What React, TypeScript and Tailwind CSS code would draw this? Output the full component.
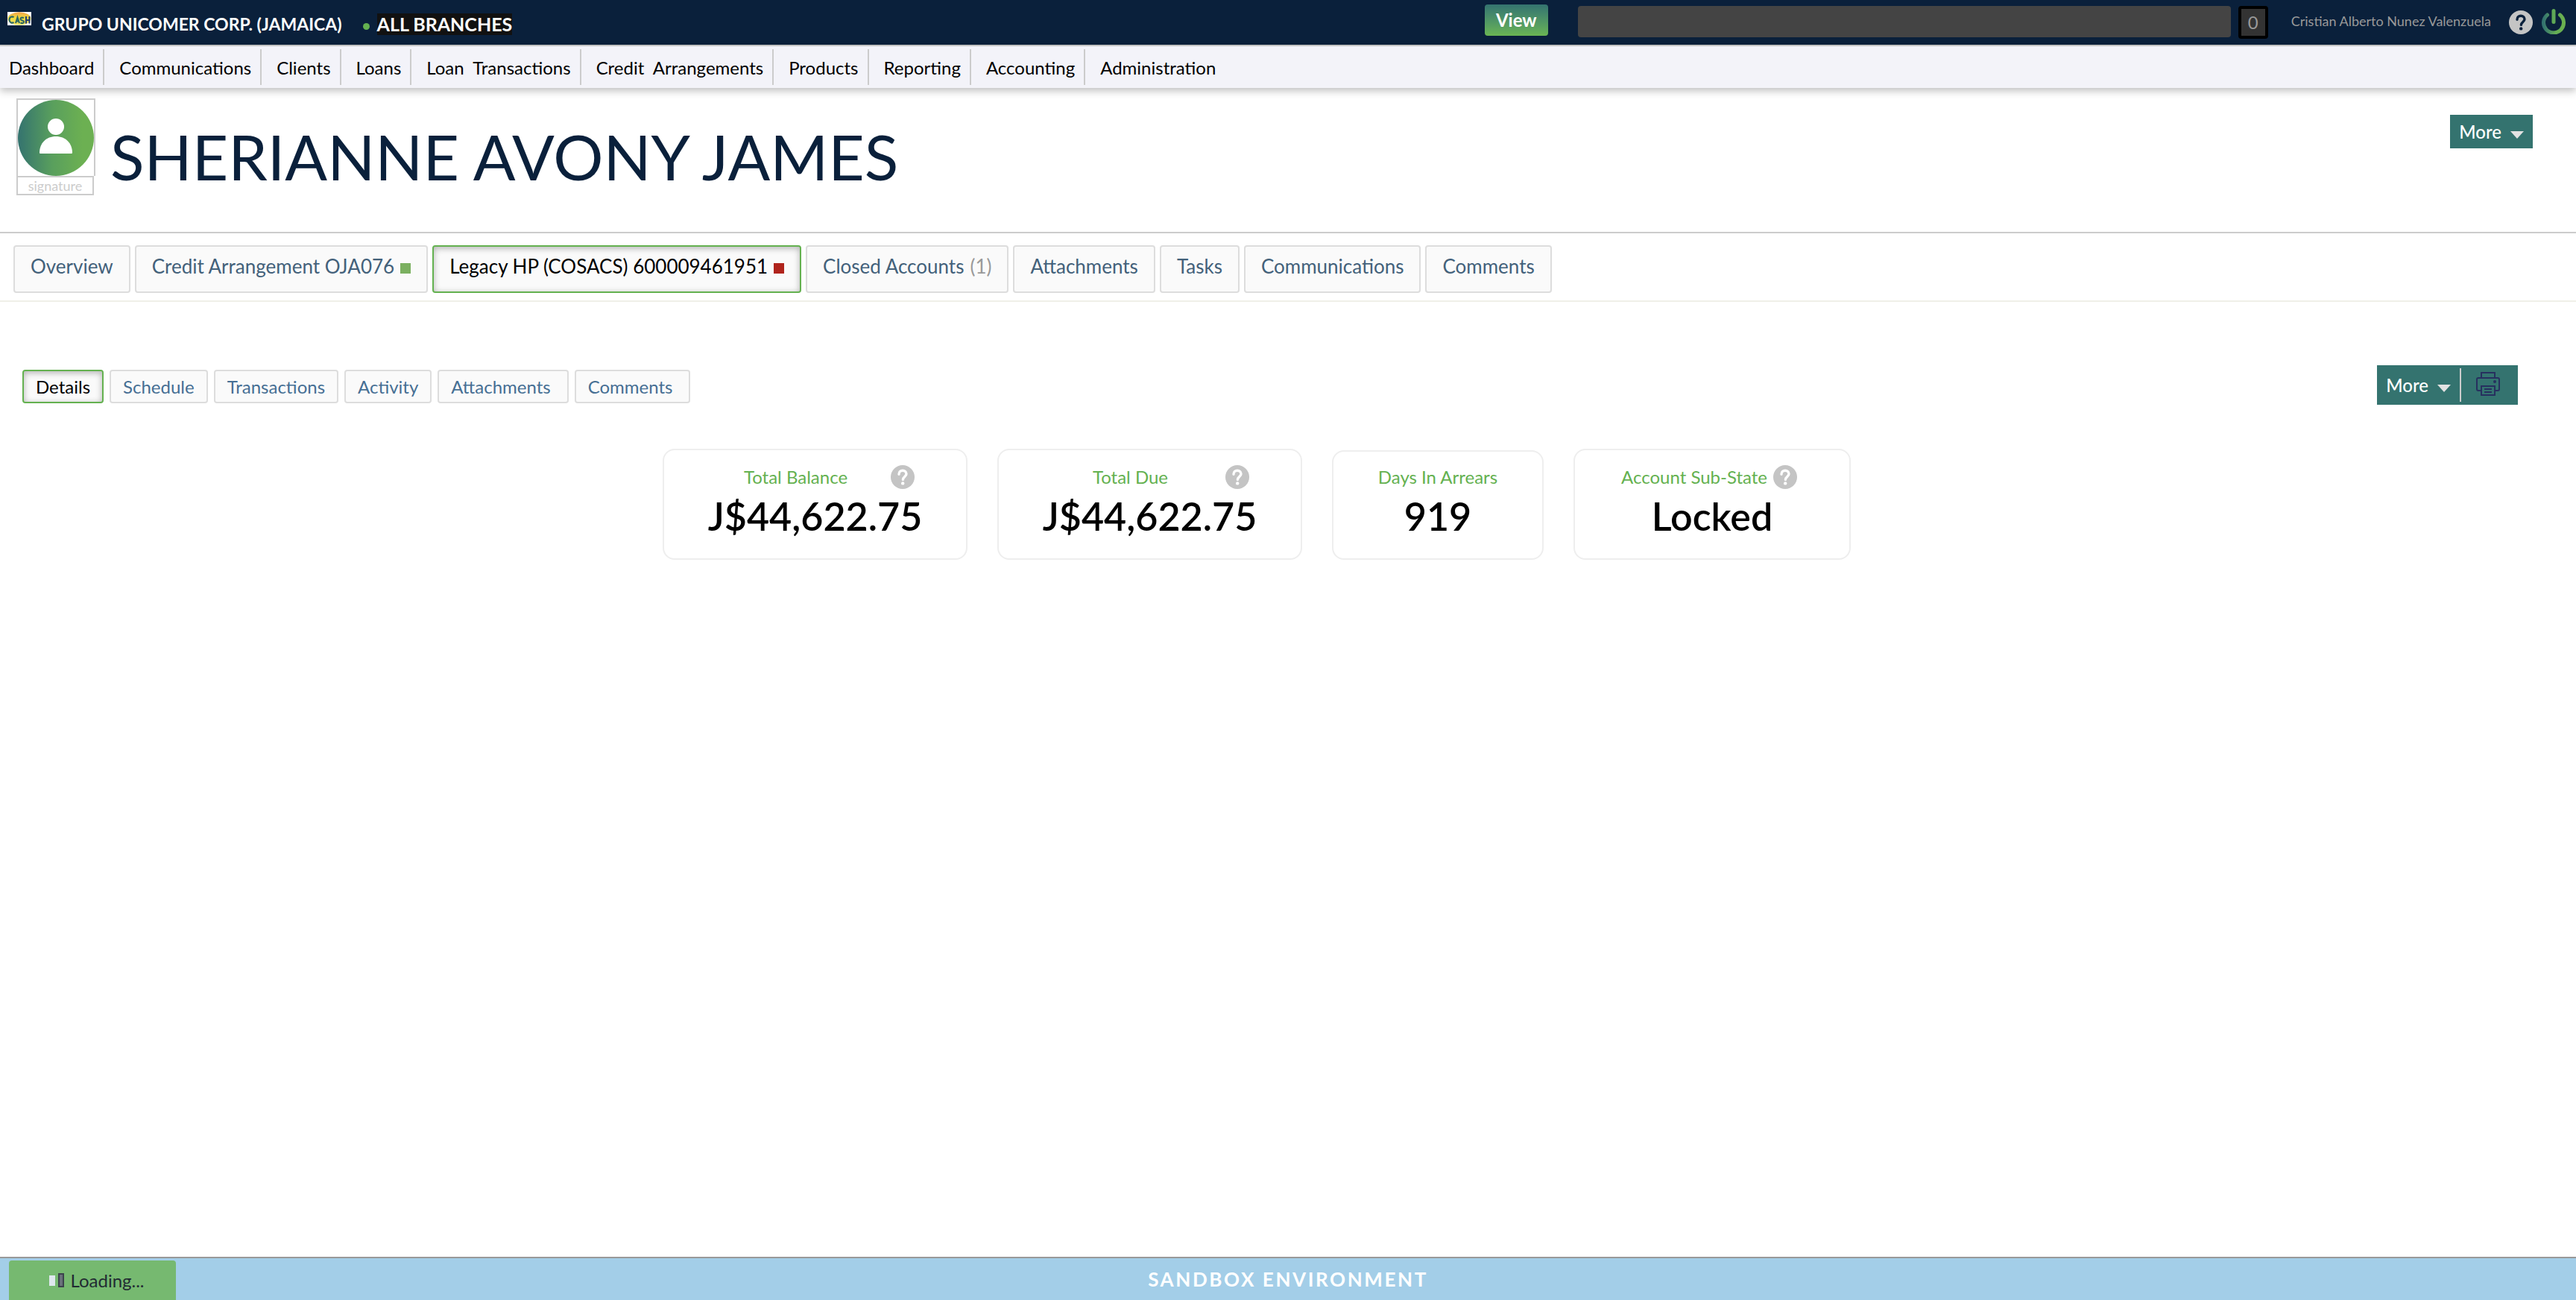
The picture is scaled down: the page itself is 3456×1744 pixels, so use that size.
import React from "react";

const NAV = [
  "Dashboard",
  "Communications",
  "Clients",
  "Loans",
  "Loan  Transactions",
  "Credit  Arrangements",
  "Products",
  "Reporting",
  "Accounting",
  "Administration",
];

type Tab = { label: string; count?: string; marker?: "green" | "red"; active?: boolean };

const TABS: Tab[] = [
  { label: "Overview" },
  { label: "Credit Arrangement OJA076", marker: "green" },
  { label: "Legacy HP (COSACS) 600009461951", marker: "red", active: true },
  { label: "Closed Accounts", count: "(1)" },
  { label: "Attachments" },
  { label: "Tasks" },
  { label: "Communications" },
  { label: "Comments" },
];

const SUB_TABS = [
  { label: "Details", pad: "px-4", active: true },
  { label: "Schedule", pad: "px-4" },
  { label: "Transactions", pad: "px-4" },
  { label: "Activity", pad: "px-4" },
  { label: "Attachments", pad: "pl-4 pr-[22px]" },
  { label: "Comments", pad: "pl-4 pr-[22px]" },
];

function HelpIcon({ mark }: { mark: string }) {
  return (
    <svg viewBox="0 0 32 32" className="size-8" aria-hidden="true">
      <circle cx="16" cy="16" r="16" fill="#c4c4c4" />
      <path
        d="M11 12.2c0-3.2 2.2-5 5-5s5 1.800 5 4.600c0 3.600-4.600 3.800-4.600 7.600"
        fill="none"
        stroke={mark}
        strokeWidth="3.400"
        strokeLinecap="round"
      />
      <circle cx="16.200" cy="24.400" r="2.200" fill={mark} />
    </svg>
  );
}

function PowerIcon() {
  return (
    <svg viewBox="0 0 32 34" className="h-[34px] w-8" aria-hidden="true">
      <defs>
        <linearGradient id="power" x1="0" y1="0" x2="1" y2="0">
          <stop offset="0" stopColor="#34736f" />
          <stop offset="0.600" stopColor="#64ad55" />
          <stop offset="1" stopColor="#6ab04f" />
        </linearGradient>
      </defs>
      <path
        d="M7.500 8A13.500 13.500 0 1 0 24.500 8"
        fill="none"
        stroke="url(#power)"
        strokeWidth="5"
        strokeLinecap="round"
      />
      <rect x="13.500" y="0" width="5" height="20" rx="2.500" fill="#5fa957" />
    </svg>
  );
}

function Logo() {
  return (
    <svg viewBox="0 0 32 18" className="h-[18px] w-8" role="img" aria-label="Cash">
      <defs>
        <linearGradient id="logo" x1="0" y1="0" x2="0" y2="1">
          <stop offset="0" stopColor="#f3a24b" />
          <stop offset="0.450" stopColor="#f0dc3c" />
          <stop offset="1" stopColor="#f4e36a" />
        </linearGradient>
      </defs>
      <rect width="32" height="18" fill="#fff" />
      <ellipse cx="16" cy="9" rx="15.500" ry="8.800" fill="url(#logo)" />
      <g fill="none" stroke="#2f6a62" strokeWidth="2.200">
        <path d="M8.500 7.200C6 5.200 2.500 7 2.500 10.500s3.500 5.300 6 3.300" />
        <path d="M11 15l2.500-7.500L16 15M11.800 12.500h3.500" />
        <path d="M22 8c-3-1-4.500 0-4.500 1.600 0 2.400 4.500 1.400 4.500 3.600 0 2-2.500 2.300-4.500 1.300" />
        <path d="M25 6v9.500M29.500 6v9.500M25 11h4.500" stroke="#27406f" />
      </g>
    </svg>
  );
}

function Avatar() {
  return (
    <svg viewBox="0 0 102 102" className="size-[102px]" role="img" aria-label="Client photo">
      <defs>
        <linearGradient id="avatar" x1="0" y1="0" x2="1" y2="0">
          <stop offset="0" stopColor="#34736f" />
          <stop offset="0.450" stopColor="#599f5d" />
          <stop offset="0.850" stopColor="#6cb052" />
          <stop offset="1" stopColor="#6cb052" />
        </linearGradient>
      </defs>
      <circle cx="51" cy="51" r="51" fill="url(#avatar)" />
      <circle cx="51" cy="36" r="11" fill="#fff" />
      <path d="M29 71c0-13 9-22 22-22s22 9 22 22q0 1-1 1H30q-1 0-1-1z" fill="#fff" />
    </svg>
  );
}

function Caret() {
  return (
    <svg viewBox="0 0 18 10" className="mt-2 h-2.5 w-[18px]" aria-hidden="true">
      <path d="M0 0h18l-9 10z" fill="#e2e2e2" />
    </svg>
  );
}

function PrinterIcon() {
  return (
    <svg
      viewBox="0 0 32 32"
      className="size-8"
      fill="none"
      stroke="#27305f"
      strokeWidth="2"
      aria-hidden="true"
    >
      <path d="M7 8V1h18v7" />
      <path d="M7 25H3q-2 0-2-2V10q0-2 2-2h26q2 0 2 2v13q0 2-2 2h-4" />
      <rect x="7" y="19" width="18" height="12" />
      <path d="M11 23h10M11 27h10" />
      <circle cx="25" cy="13" r="1" />
    </svg>
  );
}

function Card({
  title,
  value,
  help,
  className,
}: {
  title: string;
  value: string;
  help?: "spread" | "tight";
  className: string;
}) {
  return (
    <section
      className={`flex flex-col items-center rounded-2xl border-2 border-[#eeeeee] bg-white ${className}`}
    >
      <div
        className={
          help === "spread" ? "flex h-8 items-center pr-5" : help ? "flex h-8 items-center pr-2" : "flex h-8 items-center"
        }
      >
        <h2
          className={
            help === "spread" ? "w-[254px] text-center text-2xl text-[#64b150]" : "text-2xl text-[#64b150]"
          }
        >
          {title}
        </h2>
        {help && (
          <button aria-label={`About ${title}`} className={help === "tight" ? "ml-2" : ""}>
            <HelpIcon mark="#ffffff" />
          </button>
        )}
      </div>
      <p className="mt-1 text-[52px] leading-[64px] font-semibold text-black">{value}</p>
    </section>
  );
}

export default function App() {
  return (
    <div className="flex min-h-screen flex-col bg-white font-['Lato',sans-serif]">
      <header className="flex h-[62px] items-start border-b-2 border-[#cccccc] bg-[#0a203b] pr-[14px] pl-[10px]">
        <div className="pt-4">
          <Logo />
        </div>
        <h1 className="mt-4 ml-[14px] text-[23px] leading-8 font-bold text-white">
          GRUPO UNICOMER CORP. (JAMAICA)
        </h1>
        <span className="mt-[31px] ml-7 size-[9px] rounded-full bg-[#64b150]" />
        <button className="mt-[18px] ml-[10px] bg-[#111111] text-[25px] leading-[29px] font-bold text-white">
          ALL BRANCHES
        </button>
        <button className="mt-1.5 ml-auto h-[42px] w-[85px] rounded-[4px] bg-linear-to-b from-[#34736f] to-[#6ab552] text-2xl font-bold text-white">
          View
        </button>
        <input
          type="text"
          aria-label="Search"
          className="mt-2 ml-10 h-[42px] w-[876px] rounded-[4px] bg-[#444444] px-3 text-2xl text-white outline-none"
        />
        <button className="mt-2 ml-[10px] flex h-[44px] w-10 items-center justify-center rounded-[4px] border-4 border-black bg-[#333333] text-2xl text-[#999999]">
          0
        </button>
        <a href="#user" className="mt-4 ml-[31px] text-[18px] leading-6 text-[#999999]">
          Cristian Alberto Nunez Valenzuela
        </a>
        <button aria-label="Help" className="mt-[14px] ml-6">
          <HelpIcon mark="#0a203b" />
        </button>
        <button aria-label="Log out" className="mt-3 ml-3">
          <PowerIcon />
        </button>
      </header>

      <nav className="flex h-14 items-center bg-[#f3f3f9] shadow-[0_4px_10px_rgba(0,0,0,0.25)]">
        {NAV.map((item, i) => (
          <a
            key={item}
            href={`#nav-${i}`}
            className="flex h-12 items-center border-r-2 border-[#cccccc] pt-0.5 pr-3 pl-5 text-2xl whitespace-pre text-black first:pl-3 last:border-r-0"
          >
            {item}
          </a>
        ))}
      </nav>

      <div className="flex h-[195px] items-start border-b-2 border-[#cccccc] pt-[14px] pr-[58px] pl-[22px]">
        <div className="w-[106px]">
          <div className="border-2 border-b-0 border-[#cccccc]">
            <Avatar />
          </div>
          <div className="flex h-[26px] w-[104px] items-center justify-center border-2 border-[#cccccc] text-[18px] leading-5 text-[#cccccc]">
            signature
          </div>
        </div>
        <h2 className="mt-7 ml-5 text-[84px] leading-[100px] text-[#0a203b]">SHERIANNE AVONY JAMES</h2>
        <button className="mt-[22px] ml-auto flex h-[45px] items-center gap-3 bg-[#34736f] px-3 text-2xl font-medium text-white">
          More
          <Caret />
        </button>
      </div>

      <div role="tablist" aria-label="Client" className="flex gap-1.5 border-b-2 border-[#f0f0e8] px-[18px] pt-4 pb-[10px]">
        {TABS.map((tab) => (
          <button
            key={tab.label}
            role="tab"
            aria-selected={!!tab.active}
            className={
              tab.active
                ? "flex h-16 items-start rounded-[4px] border-2 border-[#64b150] bg-[#fafafa] px-[21px] pt-2.5 text-[26px] leading-8 text-black shadow-[inset_0_2px_8px_rgba(0,0,0,0.3)]"
                : "flex h-16 items-start rounded-[4px] border-2 border-[#dddddd] bg-[#fafafa] px-[21px] pt-2.5 text-[26px] leading-8 text-[#43617a]"
            }
          >
            {tab.label}
            {tab.count && <span className="ml-2 text-[#999999]">{tab.count}</span>}
            {tab.marker === "green" && <span className="mt-3 ml-2 size-3.5 bg-[#7bb060]" />}
            {tab.marker === "red" && <span className="mt-3 ml-2 size-3.5 bg-[#b0241c]" />}
          </button>
        ))}
      </div>

      <main className="grow">
        <div className="flex items-start justify-between pt-[85px] pr-[78px] pl-[30px]">
          <div role="tablist" aria-label="Account" className="flex gap-2 pt-1.5">
            {SUB_TABS.map((tab) => (
              <button
                key={tab.label}
                role="tab"
                aria-selected={!!tab.active}
                className={
                  tab.active
                    ? `h-[45px] rounded-[4px] border-2 border-[#64b150] bg-[#fafafa] text-2xl text-black shadow-[inset_0_2px_8px_rgba(0,0,0,0.3)] ${tab.pad}`
                    : `h-[45px] rounded-[4px] border-2 border-[#dddddd] bg-[#fafafa] text-2xl text-[#466f94] ${tab.pad}`
                }
              >
                {tab.label}
              </button>
            ))}
          </div>
          <div className="flex h-[53px] items-center bg-[#34736f]">
            <button className="flex items-center gap-3 px-3 text-2xl font-medium text-white">
              More
              <Caret />
            </button>
            <span className="h-[45px] w-0.5 bg-[#cccccc]" />
            <button aria-label="Print" className="-mt-1 pr-6 pl-5">
              <PrinterIcon />
            </button>
          </div>
        </div>

        <div className="flex items-end justify-center gap-10 pt-[59px] pr-[84px]">
          <Card title="Total Balance" value="J$44,622.75" help="spread" className="h-[149px] w-[409px] pt-5" />
          <Card title="Total Due" value="J$44,622.75" help="spread" className="h-[149px] w-[409px] pt-5" />
          <Card title="Days In Arrears" value="919" className="h-[147px] w-[284px] pt-[18px]" />
          <Card title="Account Sub-State" value="Locked" help="tight" className="h-[149px] w-[372px] pt-5" />
        </div>
      </main>

      <footer className="relative flex h-[58px] items-center justify-center border-t-2 border-[#999999] bg-[#a3cee8]">
        <div className="absolute top-[3px] bottom-0 left-3 flex w-56 items-center justify-center rounded-t-[4px] bg-[#76b970] pl-3 text-2xl text-[#222b33]">
          <span className="mr-1 h-3.5 w-2 bg-[#dfe8ee]" />
          <span className="mr-2 h-[19px] w-2 border-2 border-[#3c434d] bg-[#69717a]" />
          Loading...
        </div>
        <p className="text-[26px] font-bold tracking-widest text-white">SANDBOX ENVIRONMENT</p>
      </footer>
    </div>
  );
}
